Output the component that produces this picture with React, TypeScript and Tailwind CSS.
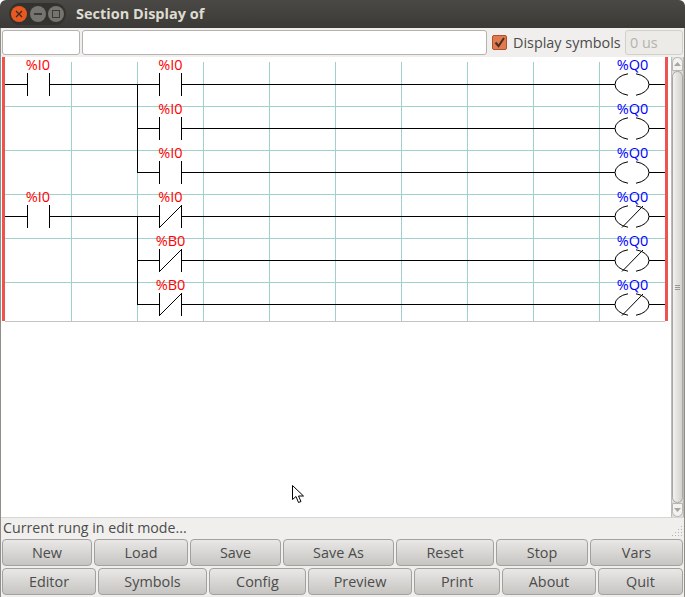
const RUNGS = [
  { y: 84, first: '%I0', second: '%I0', closed: false },
  { y: 128, first: '', second: '%I0', closed: false },
  { y: 172, first: '', second: '%I0', closed: false },
  { y: 216, first: '%I0', second: '%I0', closed: true },
  { y: 260, first: '', second: '%B0', closed: true },
  { y: 304, first: '', second: '%B0', closed: true },
];

const GRID_X = [71, 137, 203, 269, 335, 401, 467, 533, 599];
const GRID_Y = [106, 150, 194, 238, 282];

const TOP_ROW = [
  { label: 'New', w: 'w-[90px]' },
  { label: 'Load', w: 'w-[94px]' },
  { label: 'Save', w: 'w-[91px]' },
  { label: 'Save As', w: 'w-[111px]' },
  { label: 'Reset', w: 'w-[98px]' },
  { label: 'Stop', w: 'w-[92px]' },
  { label: 'Vars', w: 'w-[93px]' },
];

const BOTTOM_ROW = [
  { label: 'Editor', w: 'w-[94px]' },
  { label: 'Symbols', w: 'w-[109px]' },
  { label: 'Config', w: 'w-[97px]' },
  { label: 'Preview', w: 'w-[104px]' },
  { label: 'Print', w: 'w-[86px]' },
  { label: 'About', w: 'w-[94px]' },
  { label: 'Quit', w: 'w-[85px]' },
];

function Contact({ x, y, closed }: { x: number; y: number; closed: boolean }) {
  return (
    <g stroke="#000" fill="none">
      <path d={`M${x + 0.5} ${y - 11}V${y + 12}M${x + 22.5} ${y - 11}V${y + 12}`} shapeRendering="crispEdges" />
      {closed && <path d={`M${x + 0.5} ${y + 11.5}L${x + 22.5} ${y - 10.5}`} />}
    </g>
  );
}

function Coil({ y, closed }: { y: number; closed: boolean }) {
  const top = y + 0.5 - 10.69;
  const bottom = y + 0.5 + 10.69;
  return (
    <g stroke="#000" fill="none">
      <path d={`M628 ${top}A17 11 0 0 0 628 ${bottom}M636 ${top}A17 11 0 0 1 636 ${bottom}`} />
      {closed && <path d={`M622 ${y + 11.5}L643 ${y - 10}`} />}
    </g>
  );
}

function Ladder() {
  return (
    <svg width={667} height={265} viewBox="2 57 667 265" className="block shrink-0 overflow-visible">
      <g stroke="#9fd0cc" shapeRendering="crispEdges">
        {GRID_X.map((x) => (
          <path key={x} d={`M${x + 0.5} 62V321`} />
        ))}
        {GRID_Y.map((y) => (
          <path key={y} d={`M5 ${y + 0.5}H665`} />
        ))}
      </g>
      <path d="M5 321.5H665" stroke="#c4c4c4" shapeRendering="crispEdges" />
      {RUNGS.map((r) => (
        <g key={r.y}>
          <path
            d={`M${r.first ? 5 : 137} ${r.y + 0.5}H${r.first ? 27 : 159}${r.first ? `M49 ${r.y + 0.5}H159` : ''}M182 ${r.y + 0.5}H615M649 ${r.y + 0.5}H665`}
            stroke="#000"
            shapeRendering="crispEdges"
          />
          {r.first && <Contact x={27} y={r.y} closed={false} />}
          <Contact x={159} y={r.y} closed={r.closed} />
          <Coil y={r.y} closed={r.closed} />
          {r.first && (
            <text x={38} y={r.y - 14} textAnchor="middle" fill="#ff0000" fontSize={14.5} fontFamily="'Open Sans', sans-serif">
              {r.first}
            </text>
          )}
          <text x={170.5} y={r.y - 14} textAnchor="middle" fill="#ff0000" fontSize={14.5} fontFamily="'Open Sans', sans-serif">
            {r.second}
          </text>
          <text x={632.5} y={r.y - 14} textAnchor="middle" fill="#0000ff" fontSize={14.5} fontFamily="'Open Sans', sans-serif">
            %Q0
          </text>
        </g>
      ))}
      <path d="M137.5 84V173" stroke="#000" shapeRendering="crispEdges" />
      <path d="M137.5 216V305" stroke="#000" shapeRendering="crispEdges" />
      <rect x={2} y={57} width={3} height={264} fill="#ef5350" />
      <rect x={665} y={57} width={3} height={264} fill="#ef5350" />
    </svg>
  );
}

function Scrollbar() {
  return (
    <div className="w-[13px] ml-[2px] shrink-0 bg-[#dedcd9] border-x border-[#bdbbb7] flex flex-col items-center">
      <div className="w-[11px] h-[14px] rounded-t-[6px] bg-[#f3f2f0] border border-[#b8b6b2] flex justify-center pt-[4px]">
        <svg width={7} height={4} viewBox="0 0 7 4">
          <path d="M3.5 0L7 4H0z" fill="#a8a6a2" />
        </svg>
      </div>
      <div className="w-[11px] flex-1 rounded-[6px] border border-[#a9a7a3] bg-gradient-to-r from-[#f2f1ef] to-[#d4d2cf] flex flex-col items-center justify-center gap-[1px]">
        <div className="w-[5px] h-px bg-[#9a9894]" />
        <div className="w-[5px] h-px bg-[#9a9894]" />
        <div className="w-[5px] h-px bg-[#9a9894]" />
      </div>
      <div className="w-[11px] h-[14px] rounded-b-[6px] bg-[#f3f2f0] border border-[#b8b6b2] flex justify-center pt-[4px]">
        <svg width={7} height={4} viewBox="0 0 7 4">
          <path d="M0 0H7L3.5 4z" fill="#a8a6a2" />
        </svg>
      </div>
    </div>
  );
}

function ButtonRow({ items }: { items: { label: string; w: string }[] }) {
  return (
    <div className="flex gap-[2px] px-[1px]">
      {items.map((b) => (
        <button
          key={b.label}
          className={`${b.w} h-[27px] pt-[2px] rounded-[4px] border border-[#a3a19d] bg-gradient-to-b from-[#e9e8e6] to-[#c6c5c2] text-[14.4px] text-[#4c4c4c] leading-none`}
        >
          {b.label}
        </button>
      ))}
    </div>
  );
}

export default function App() {
  return (
    <div className="relative w-[685px] h-[597px] bg-white font-['Open_Sans',sans-serif] overflow-hidden">
      <div className="h-[28px] rounded-t-[6px] bg-gradient-to-b from-[#4a4945] to-[#3b3a36] flex items-center">
        <div className="ml-[9px] w-[57px] h-[22px] rounded-full bg-[#33322e] flex items-center gap-[2.5px] pl-[2px]">
          <div className="w-[16px] h-[16px] rounded-full bg-[#e9591f] flex items-center justify-center">
            <svg width={8} height={8} viewBox="0 0 8 8">
              <path d="M1 1L7 7M7 1L1 7" stroke="#3b2a20" strokeWidth={1.3} />
            </svg>
          </div>
          <div className="w-[16px] h-[16px] rounded-full bg-[#76746e] flex items-center justify-center">
            <div className="w-[8px] h-[2px] bg-[#3b3a36]" />
          </div>
          <div className="w-[16px] h-[16px] rounded-full bg-[#76746e] flex items-center justify-center">
            <div className="w-[8px] h-[8px] border border-[#3b3a36]" />
          </div>
        </div>
        <span className="ml-[10px] text-[14.5px] font-bold text-[#dfdbd2]">Section Display of</span>
      </div>

      <div className="h-[569px] border-x border-[#8f8e89] bg-[#f0efed] flex flex-col">
        <div className="h-[29px] flex items-center px-[1px]">
          <div className="w-[78px] h-[25px] rounded-[3px] border border-[#b5b3ad] bg-white" />
          <div className="ml-[2px] w-[405px] h-[25px] rounded-[3px] border border-[#b5b3ad] bg-white" />
          <div className="ml-[5px] w-[15px] h-[15px] rounded-[2px] border border-[#b0512b] bg-[#e07a50] flex items-center justify-center">
            <svg width={13} height={13} viewBox="0 0 13 13">
              <path d="M2.5 6.5L5.5 10L11 2" stroke="#4a2e20" strokeWidth={2} fill="none" />
            </svg>
          </div>
          <span className="ml-[6px] w-[112px] text-[14.4px] text-[#4c4c4c] whitespace-nowrap">Display symbols</span>
          <div className="w-[58px] h-[25px] rounded-[3px] border border-[#d2d0cb] bg-[#ecebe8] pl-[4px] text-[14.4px] leading-[23px] text-[#b5b3ae]">
            0 us
          </div>
        </div>

        <div className="h-[460px] bg-white flex pl-[1px]">
          <Ladder />
          <Scrollbar />
        </div>

        <div className="h-[22px] pb-[1px] border-t border-[#d6d5d2] flex items-center pl-[2px]">
          <span className="text-[14.2px] text-[#4c4c4c]">Current rung in edit mode...</span>
          <svg width={12} height={12} viewBox="0 0 12 12" className="ml-auto mr-[1px] mt-[6px]">
            <path d="M10 1h1v1h-1zM7 4h1v1H7zM10 4h1v1h-1zM4 7h1v1H4zM7 7h1v1H7zM10 7h1v1h-1zM1 10h1v1H1zM4 10h1v1H4zM7 10h1v1H7zM10 10h1v1h-1z" fill="#b5b3ae" />
          </svg>
        </div>

        <div className="flex flex-col gap-[2px]">
          <ButtonRow items={TOP_ROW} />
          <ButtonRow items={BOTTOM_ROW} />
        </div>
      </div>

      {/* mouse pointer */}
      <svg width={14} height={20} viewBox="0 0 14 20" className="absolute left-[292px] top-[485px]">
        <path d="M0.5 0.5V14.5L4 11.5L6.5 17.5L9 16.5L6.5 11H11.5z" fill="#fff" stroke="#000" />
      </svg>
    </div>
  );
}
